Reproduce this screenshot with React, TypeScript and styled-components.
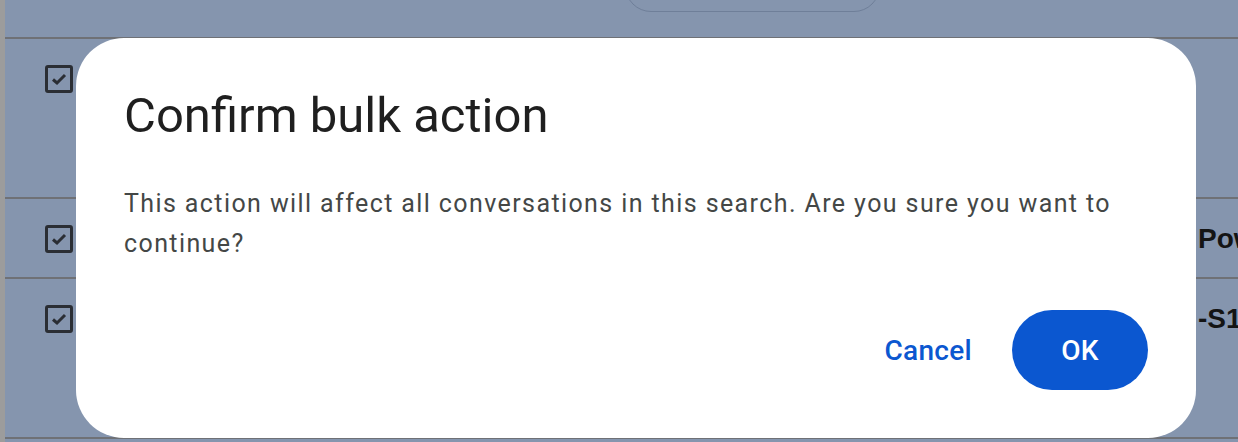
import styled, { createGlobalStyle } from "styled-components";

const GlobalStyle = createGlobalStyle`
    html, body {
        margin: 0;
        padding: 0;
        background: #8595ae;
    }
    * {
        box-sizing: border-box;
    }
`

const Page = styled.div`
    position: relative;
    width: 1238px;
    height: 442px;
    overflow: hidden;
    background: #8595ae;
    border-left: 5px solid #9c9c9c;
    font-family: Roboto, "Liberation Sans", sans-serif;
`

const Header = styled.div`
    height: 39px;
    display: flex;
    align-items: flex-start;
    padding-left: 620px;
    border-bottom: 2px solid #6f7176;
`

const Pill = styled.div`
    width: 255px;
    height: 52px;
    margin-top: -40px;
    border: 1.5px solid #6f7f99;
    border-radius: 26px;
`

const Row = styled.div<{ $height: number }>`
    height: ${(p) => p.$height}px;
    display: flex;
    align-items: flex-start;
    border-bottom: 2px solid #6f7176;
`

const Checkbox = styled.div`
    width: 28px;
    height: 28px;
    margin: 26px 0 0 40px;
    border: 3px solid #2b2e34;
    border-radius: 3px;
    display: flex;
    align-items: center;
    justify-content: center;
`

const Spacer = styled.div`
    flex: 1;
`

const Cell = styled.div`
    width: 40px;
    padding-top: 24px;
    white-space: nowrap;
    overflow: hidden;
    font-family: "Liberation Sans", Arial, sans-serif;
    font-size: 28px;
    line-height: 32px;
    font-weight: 700;
    color: #141414;
`

const Dialog = styled.div`
    position: absolute;
    left: 71px;
    top: 38px;
    width: 1120px;
    height: 400px;
    background: #fff;
    border-radius: 48px;
    padding: 48px;
    display: flex;
    flex-direction: column;
`

const Title = styled.h2`
    margin: 0;
    font-size: 49px;
    line-height: 60px;
    font-weight: 400;
    color: #1f1f1f;
`

const Message = styled.p`
    margin: 38px 0 0;
    font-size: 25px;
    line-height: 40px;
    letter-spacing: 1.4px;
    color: #444746;
`

const Actions = styled.div`
    margin-top: auto;
    display: flex;
    justify-content: flex-end;
    align-items: center;
    gap: 16px;
`

const Button = styled.button<{ $filled?: boolean }>`
    height: 80px;
    padding: 0 ${(p) => (p.$filled ? 44 : 24)}px;
    min-width: ${(p) => (p.$filled ? 136 : 0)}px;
    border: none;
    border-radius: 40px;
    font-family: Roboto, "Liberation Sans", sans-serif;
    font-size: 28px;
    font-weight: 500;
    letter-spacing: 0.3px;
    background: ${(p) => (p.$filled ? "#0b57d0" : "transparent")};
    color: ${(p) => (p.$filled ? "#fff" : "#0b57d0")};
    cursor: pointer;
`

const Check = () => (
    <svg width="18" height="18" viewBox="0 0 18 18">
        <path d="M3 9.5 L7 13 L15 5" fill="none" stroke="#2b2e34" strokeWidth="3" />
    </svg>
)

export default function App() {
    return (
        <>
            <GlobalStyle />
            <Page>
                <Header>
                    <Pill />
                </Header>
                <Row $height={160}>
                    <Checkbox><Check /></Checkbox>
                </Row>
                <Row $height={80}>
                    <Checkbox><Check /></Checkbox>
                    <Spacer />
                    <Cell>Power</Cell>
                </Row>
                <Row $height={160}>
                    <Checkbox><Check /></Checkbox>
                    <Spacer />
                    <Cell>-S100</Cell>
                </Row>
                <Dialog>
                    <Title>Confirm bulk action</Title>
                    <Message>
                        This action will affect all conversations in this search. Are you sure you want to continue?
                    </Message>
                    <Actions>
                        <Button>Cancel</Button>
                        <Button $filled>OK</Button>
                    </Actions>
                </Dialog>
            </Page>
        </>
    )
}
